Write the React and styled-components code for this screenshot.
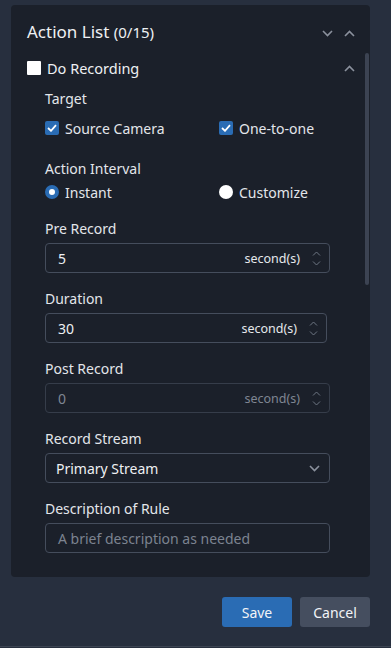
import React from 'react'
import styled, { createGlobalStyle } from 'styled-components'

const GlobalStyle = createGlobalStyle`
    html, body {
        margin: 0;
        padding: 0;
        background: #272f3e;
        font-family: "Noto Sans", "Open Sans", sans-serif;
    }
`

const Chevron = ({ up, size = 11, color = '#8b919d' }) => (
    <svg width={size} height={7} viewBox="0 0 11 7">
        <polyline
            points={up ? '1,6 5.5,1.5 10,6' : '1,1 5.5,5.5 10,1'}
            fill="none"
            stroke={color}
            strokeWidth="1.6"
        />
    </svg>
)

const SmallChevron = ({ up }) => (
    <svg width={9} height={5} viewBox="0 0 9 5">
        <polyline
            points={up ? '1,4.5 4.5,1 8,4.5' : '1,0.5 4.5,4 8,0.5'}
            fill="none"
            stroke="#6f7683"
            strokeWidth="1"
        />
    </svg>
)

const CheckIcon = () => (
    <svg width={10} height={8} viewBox="0 0 10 8">
        <polyline points="1,4 4,6.8 9,1.2" fill="none" stroke="#fff" strokeWidth="1.8" />
    </svg>
)

function NumberField({ value, width, disabled }) {
    return (
        <InputBox width={width} disabled={disabled}>
            <Value disabled={disabled}>{value}</Value>
            <Unit disabled={disabled}>second(s)</Unit>
            <Spinner>
                <SmallChevron up />
                <SmallChevron />
            </Spinner>
        </InputBox>
    )
}

export default function App() {
    return (
        <Page>
            <GlobalStyle />
            <Panel>
                <Header>
                    <Title>Action List <Count>(0/15)</Count></Title>
                    <HeaderIcons>
                        <Chevron />
                        <Chevron up />
                    </HeaderIcons>
                </Header>
                <ActionRow>
                    <WhiteBox />
                    <ActionName>Do Recording</ActionName>
                    <RowChevron><Chevron up /></RowChevron>
                </ActionRow>
                <Body>
                    <Label>Target</Label>
                    <OptionGrid mt={9}>
                        <Option><BlueBox><CheckIcon /></BlueBox>Source Camera</Option>
                        <Option><BlueBox><CheckIcon /></BlueBox>One-to-one</Option>
                    </OptionGrid>
                    <Label mt={21}>Action Interval</Label>
                    <OptionGrid mt={3}>
                        <Option><Radio checked />Instant</Option>
                        <Option><Radio />Customize</Option>
                    </OptionGrid>
                    <Field mt={17}>
                        <Label>Pre Record</Label>
                        <NumberField value="5" width={285} />
                    </Field>
                    <Field>
                        <Label>Duration</Label>
                        <NumberField value="30" width={282} />
                    </Field>
                    <Field>
                        <Label>Post Record</Label>
                        <NumberField value="0" width={285} disabled />
                    </Field>
                    <Field>
                        <Label>Record Stream</Label>
                        <SelectBox>
                            <span>Primary Stream</span>
                            <Chevron />
                        </SelectBox>
                    </Field>
                    <Field>
                        <Label>Description of Rule</Label>
                        <TextBox>A brief description as needed</TextBox>
                    </Field>
                </Body>
                <ScrollThumb />
            </Panel>
            <Footer>
                <Button primary>Save</Button>
                <Button>Cancel</Button>
            </Footer>
        </Page>
    )
}

const Page = styled.div`
    height: 647px;
    border-bottom: 1px solid #3d4553;
    padding-top: 5px;
    box-sizing: border-box;
    position: relative;
`

const Panel = styled.div`
    position: relative;
    margin-left: 11px;
    width: 359px;
    height: 572px;
    background: #1b202a;
    border-radius: 4px;
    overflow: hidden;
`

const Header = styled.div`
    display: flex;
    align-items: center;
    justify-content: space-between;
    padding: 16px 15px 0 16px;
    height: 22px;
`

const Title = styled.div`
    color: #eef0f3;
    font-size: 17px;
    line-height: 22px;
`

const Count = styled.span`
    font-size: 15px;
`

const HeaderIcons = styled.div`
    display: flex;
    gap: 11px;
    align-items: center;
    padding-top: 2px;
`

const ActionRow = styled.div`
    display: flex;
    align-items: center;
    margin-top: 15px;
    padding: 0 15px 0 16px;
    height: 20px;
`

const WhiteBox = styled.span`
    width: 14px;
    height: 14px;
    background: #fff;
    border-radius: 1px;
`

const ActionName = styled.span`
    margin-left: 6px;
    color: #eef0f3;
    font-size: 14.5px;
    flex: 1;
`

const RowChevron = styled.span`
    display: flex;
`

const Body = styled.div`
    padding: 11px 0 0 34px;
    display: flex;
    flex-direction: column;
`

const Label = styled.div`
    color: #e3e6ea;
    font-size: 14px;
    line-height: 20px;
    margin-top: ${p => (p.mt || 0)}px;
`

const OptionGrid = styled.div`
    display: grid;
    grid-template-columns: 174px auto;
    margin-top: ${p => (p.mt || 0)}px;
`

const Option = styled.div`
    display: flex;
    align-items: center;
    gap: 6px;
    height: 20px;
    color: #e3e6ea;
    font-size: 14px;
`

const BlueBox = styled.span`
    width: 14px;
    height: 14px;
    background: #2a6cb4;
    border-radius: 2px;
    display: flex;
    align-items: center;
    justify-content: center;
`

const Radio = styled.span`
    width: 14px;
    height: 14px;
    border-radius: 50%;
    box-sizing: border-box;
    background: #fff;
    border: ${p => (p.checked ? '4.5px solid #2a6cb4' : 'none')};
`

const Field = styled.div`
    display: flex;
    flex-direction: column;
    gap: 4px;
    margin-top: ${p => (p.mt !== undefined ? p.mt : 16)}px;
`

const InputBox = styled.div`
    width: ${p => p.width}px;
    height: 30px;
    box-sizing: border-box;
    border: 1px solid ${p => (p.disabled ? '#363d4a' : '#454d5c')};
    border-radius: 4px;
    display: flex;
    align-items: center;
    padding: 0 8px 0 12px;
`

const Value = styled.span`
    flex: 1;
    font-size: 14px;
    color: ${p => (p.disabled ? '#7f8692' : '#eef0f3')};
`

const Unit = styled.span`
    font-size: 12.5px;
    color: ${p => (p.disabled ? '#7f8692' : '#e6e9ec')};
`

const Spinner = styled.span`
    display: flex;
    flex-direction: column;
    gap: 5px;
    margin-left: 12px;
`

const SelectBox = styled.div`
    width: 285px;
    height: 30px;
    box-sizing: border-box;
    border: 1px solid #454d5c;
    border-radius: 4px;
    display: flex;
    align-items: center;
    justify-content: space-between;
    padding: 0 9px 0 10px;
    color: #eef0f3;
    font-size: 14px;
`

const TextBox = styled.div`
    width: 285px;
    height: 30px;
    box-sizing: border-box;
    border: 1px solid #454d5c;
    border-radius: 4px;
    display: flex;
    align-items: center;
    padding-left: 12px;
    color: #7c8390;
    font-size: 14px;
`

const ScrollThumb = styled.div`
    position: absolute;
    right: 1px;
    top: 48px;
    width: 4px;
    height: 232px;
    background: #3c4352;
    border-radius: 2px;
`

const Footer = styled.div`
    display: flex;
    justify-content: flex-end;
    gap: 8px;
    width: 370px;
    margin-top: 20px;
`

const Button = styled.button`
    width: 70px;
    height: 30px;
    border: none;
    border-radius: 3px;
    background: ${p => (p.primary ? '#2a6cb4' : '#454e5f')};
    color: #f2f4f7;
    font-family: "Noto Sans", sans-serif;
    font-size: 14px;
    padding: 0;
`
